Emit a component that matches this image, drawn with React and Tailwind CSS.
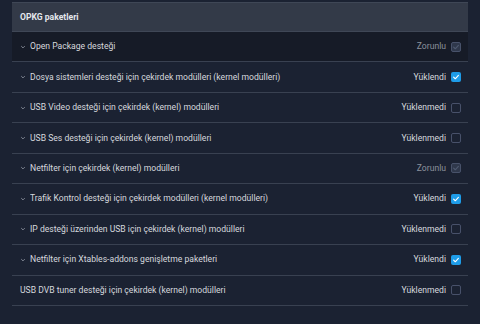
import React from "react";

const rows = [
  { label: "Open Package desteği", status: "Zorunlu", state: "required", dark: true },
  { label: "Dosya sistemleri desteği için çekirdek modülleri (kernel modülleri)", status: "Yüklendi", state: "on" },
  { label: "USB Video desteği için çekirdek (kernel) modülleri", status: "Yüklenmedi", state: "off" },
  { label: "USB Ses desteği için çekirdek (kernel) modülleri", status: "Yüklenmedi", state: "off" },
  { label: "Netfilter için çekirdek (kernel) modülleri", status: "Zorunlu", state: "required" },
  { label: "Trafik Kontrol desteği için çekirdek modülleri (kernel modülleri)", status: "Yüklendi", state: "on" },
  { label: "IP desteği üzerinden USB için çekirdek (kernel) modülleri", status: "Yüklenmedi", state: "off" },
  { label: "Netfilter için Xtables-addons genişletme paketleri", status: "Yüklendi", state: "on" },
  { label: "USB DVB tuner desteği için çekirdek (kernel) modülleri", status: "Yüklenmedi", state: "off", noChevron: true },
];

const Check = ({ color }) => (
  <svg viewBox="0 0 10 10" className="w-[8px] h-[8px]">
    <path d="M2 5.2 L4.1 7.2 L8 3" fill="none" stroke={color} strokeWidth="1.4" strokeLinecap="round" strokeLinejoin="round" />
  </svg>
);

const Box = ({ state }) => {
  if (state === "on")
    return (
      <div className="w-[10px] h-[10px] rounded-[2px] bg-[#1e9ce8] flex items-center justify-center">
        <Check color="#ffffff" />
      </div>
    );
  if (state === "required")
    return (
      <div className="w-[10px] h-[10px] rounded-[2px] bg-[#2f384b] border border-[#48526a] flex items-center justify-center">
        <Check color="#4f5a70" />
      </div>
    );
  return <div className="w-[10px] h-[10px] rounded-[2px] border border-[#48516a]" />;
};

const Chevron = () => (
  <svg viewBox="0 0 10 10" className="w-[6px] h-[6px] mr-[4px]">
    <path d="M2 3.5 L5 6.5 L8 3.5" fill="none" stroke="#9aa1ad" strokeWidth="1.3" />
  </svg>
);

export default function App() {
  return (
    <div
      className="w-[480px] h-[324px] bg-[#1b2232] pt-[2px] overflow-hidden"
      style={{ fontFamily: "Roboto, 'Noto Sans', sans-serif" }}
    >
      <div className="mx-[12px]">
        <div className="h-[30px] bg-[#333a48] border-t border-b border-[#3f4756] flex items-center pl-[8px] pr-[7px]">
          <span className="text-[8.6px] font-bold text-[#e4e7ec]">OPKG paketleri</span>
        </div>
        {rows.map((r, i) => (
          <div
            key={i}
            className={`h-[30.45px] border-b border-[#394151] flex items-center pl-[8px] pr-[7px] ${
              r.dark ? "bg-[#161b27]" : ""
            }`}
          >
            {!r.noChevron && <Chevron />}
            <span className="text-[8.6px] text-[#d6d9de] flex-1 truncate">{r.label}</span>
            <span
              className={`text-[8.6px] mr-[5px] ${
                r.state === "required" ? "text-[#8c929c]" : "text-[#d6d9de]"
              }`}
            >
              {r.status}
            </span>
            <Box state={r.state} />
          </div>
        ))}
      </div>
    </div>
  );
}
